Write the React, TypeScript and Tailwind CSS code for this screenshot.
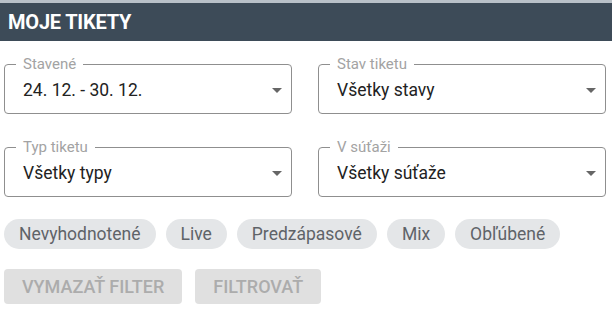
const selects = [
  { label: "Stavené", value: "24. 12. - 30. 12." },
  { label: "Stav tiketu", value: "Všetky stavy" },
  { label: "Typ tiketu", value: "Všetky typy" },
  { label: "V súťaži", value: "Všetky súťaže" },
];

const chips = ["Nevyhodnotené", "Live", "Predzápasové", "Mix", "Obľúbené"];

function Select({ label, value }: { label: string; value: string }) {
  return (
    <div className="relative h-[50px] rounded-[4px] border border-[#8f8f8f] pl-[18px] pr-[9px] flex items-center justify-between">
      <span className="absolute -top-[10px] left-[11px] bg-white px-[7px] text-[15px] leading-[18px] text-[#a3a3a3]">
        {label}
      </span>
      <span className="text-[17.5px] text-[#222] pt-[2px]">{value}</span>
      <span className="h-0 w-0 border-x-[5px] border-t-[5px] border-x-transparent border-t-[#666] mt-[2px]" />
    </div>
  );
}

export default function App() {
  return (
    <div className="w-[612px] h-[311px] bg-white font-['Roboto',sans-serif]">
      <div className="h-[41px] border-t-[3px] border-[#b9c1c8] bg-[#3d4b58] px-2 flex items-center">
        <h1 className="text-[20px] font-bold text-white tracking-[-0.2px]">MOJE TIKETY</h1>
      </div>

      <div className="grid grid-cols-2 gap-x-[26px] gap-y-[33px] pl-[4px] pr-[6px] pt-[23px]">
        {selects.map((s) => (
          <Select key={s.label} label={s.label} value={s.value} />
        ))}
      </div>

      <div className="flex gap-[10px] px-[4px] mt-[22px]">
        {chips.map((c) => (
          <span
            key={c}
            className="h-[30px] rounded-full bg-[#e4e6e8] px-[15px] flex items-center text-[17.5px] text-[#5f6368]"
          >
            {c}
          </span>
        ))}
      </div>

      <div className="flex gap-[13px] px-[4px] mt-[20px]">
        <button className="h-[35px] rounded-[4px] bg-[#e0e0e0] px-[18px] text-[18px] font-medium text-[#acacac]">
          VYMAZAŤ FILTER
        </button>
        <button className="h-[35px] rounded-[4px] bg-[#e0e0e0] px-[18px] text-[18px] font-medium text-[#acacac]">
          FILTROVAŤ
        </button>
      </div>
    </div>
  );
}
